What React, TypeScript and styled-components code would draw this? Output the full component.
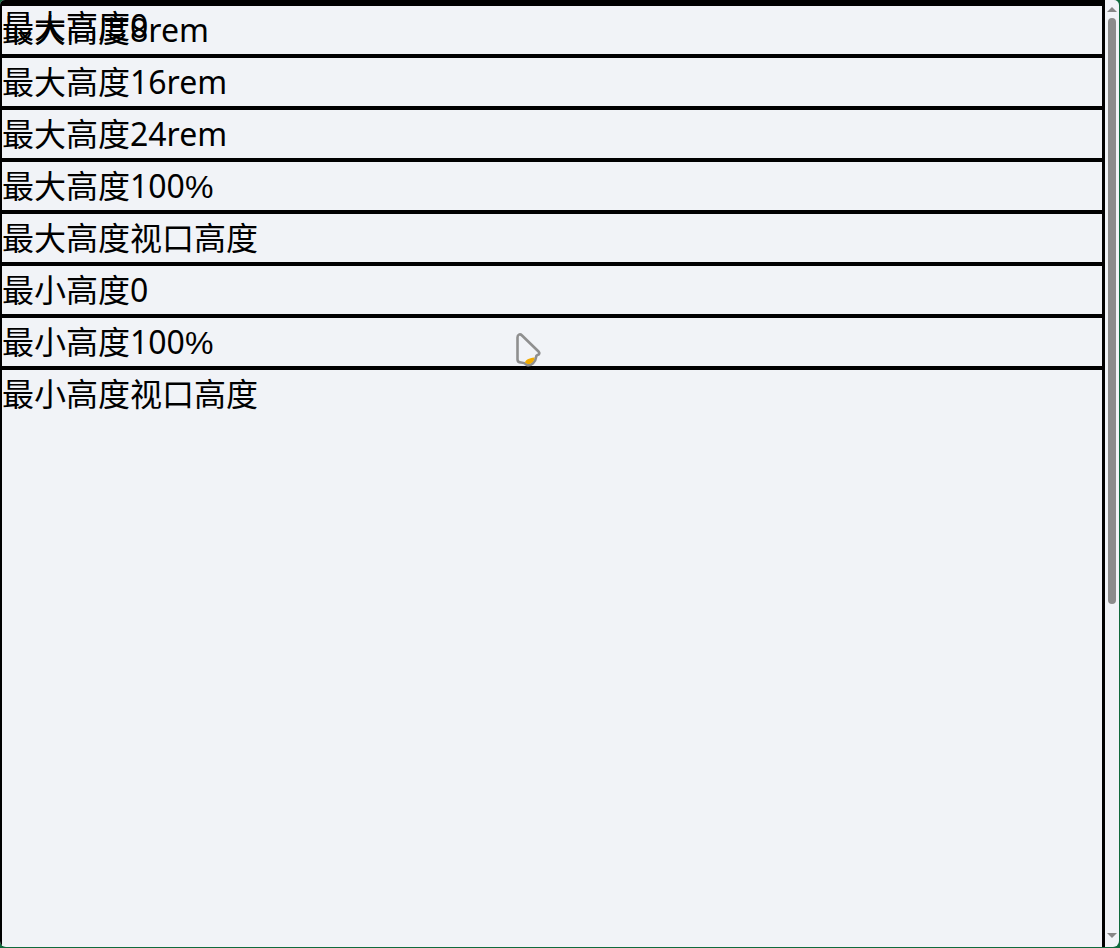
import styled, { createGlobalStyle } from 'styled-components'

const rows = [
  '最大高度8rem',
  '最大高度16rem',
  '最大高度24rem',
  '最大高度100%',
  '最大高度视口高度',
  '最小高度0',
  '最小高度100%',
  '最小高度视口高度',
]

const GlobalStyle = createGlobalStyle`
  html, body {
    margin: 0;
    height: 100%;
    overflow: hidden;
    background: #0f6a3c;
  }
  #root {
    height: 100%;
  }
`

const Frame = styled.div`
  position: relative;
  display: flex;
  width: 1119px;
  height: 947px;
  overflow: hidden;
  border-radius: 5px 5px 6px 6px;
  background: #f1f3f7;
  color: #000;
  font-family: 'Segoe UI', 'Noto Sans', 'Noto Sans CJK SC', sans-serif;
  font-size: 32px;
  line-height: 48px;
`

const List = styled.ul`
  flex: 1;
  margin: 0;
  padding: 2px 0 0 0;
  list-style: none;
  background: linear-gradient(#000 2px, transparent 2px);
  border-left: 2px solid #000;
  border-right: 3px solid #000;
`

const Row = styled.li`
  position: relative;
  height: 48px;
  border-top: 4px solid #000;
  white-space: nowrap;
`

const Overlap = styled.span`
  position: absolute;
  left: 0;
  top: -4px;
`

const Percent = styled.span`
  font-family: 'Liberation Sans', sans-serif;
`

const Scrollbar = styled.div`
  display: flex;
  flex-direction: column;
  align-items: center;
  width: 14px;
  padding: 7px 0 9px;
`

const Arrow = styled.div<{ $down?: boolean }>`
  width: 0;
  height: 0;
  border-left: 5px solid transparent;
  border-right: 5px solid transparent;
  ${(p) => (p.$down ? 'border-top: 5px solid #868686;' : 'border-bottom: 5px solid #868686;')}
`

const Thumb = styled.div`
  width: 8px;
  height: 586px;
  margin-top: 6px;
  border-radius: 4px;
  background: #8b8b8b;
`

const Spacer = styled.div`
  flex: 1;
`

const Cursor = styled.svg`
  position: absolute;
  left: 514px;
  top: 332px;
`

export default function App() {
  return (
    <>
      <GlobalStyle />
      <Frame>
        <List>
          {rows.map((text, i) => (
            <Row key={text}>
              {i === 0 && <Overlap>最大高度0</Overlap>}
              {text.endsWith('%') ? (
                <>
                  {text.slice(0, -1)}
                  <Percent>%</Percent>
                </>
              ) : (
                text
              )}
            </Row>
          ))}
        </List>
        <Scrollbar>
          <Arrow />
          <Thumb />
          <Spacer />
          <Arrow $down />
        </Scrollbar>
        <Cursor width="28" height="36" viewBox="0 0 28 36">
          <path
            d="M3.5 5.5 C3.5 2.5 6 1.5 8 3.5 L24.5 19.5 C26 21 25.5 22.5 23.5 23 C22.5 23.3 22 24 22 25.5 C21.5 30 17.5 34 13 33 C11.5 31.5 10 30.5 7 30.5 C4.5 30.5 3.5 29.5 3.5 27.5 Z"
            fill="#f1f3f7"
            stroke="#8f8f8f"
            strokeWidth="2.6"
            strokeLinejoin="round"
          />
          <path d="M11 30.5 C11.5 28 14.5 26 20.5 25.5 C20.5 29 17.5 32.5 13.5 32 Z" fill="#f2ab00" />
        </Cursor>
      </Frame>
    </>
  )
}
